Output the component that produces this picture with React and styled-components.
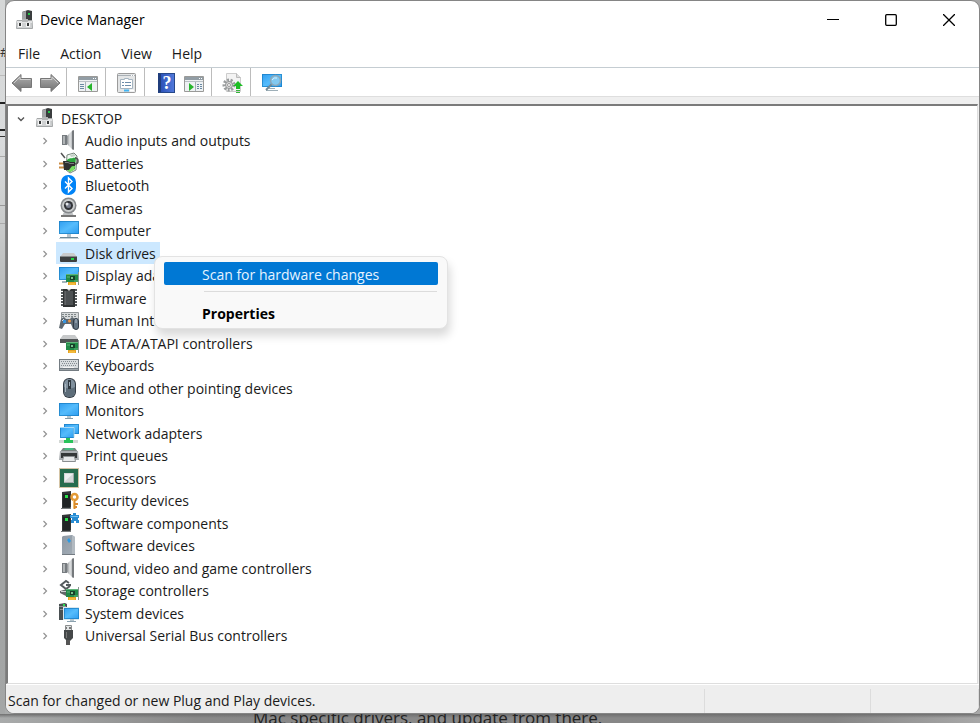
import React from "react";
import styled, { createGlobalStyle, css } from "styled-components";

const GlobalStyle = createGlobalStyle`
  * { box-sizing: border-box; }
  body {
    margin: 0;
    font-family: "Open Sans", "Noto Sans", sans-serif;
    font-size: 14px;
    color: #1a1a1a;
  }
  button {
    font: inherit;
    color: inherit;
    background: none;
    border: 0;
    padding: 0;
  }
  svg { display: block; flex: none; }
`;

/* ---------- desktop and window ---------- */

const Desktop = styled.div`
  min-height: 100vh;
  display: flex;
  flex-direction: column;
  overflow: hidden;
  background: linear-gradient(90deg, #a9abab, #898989 20%, #868686 85%, #a8a8a8);
`;

const Middle = styled.div`
  flex: 1;
  display: flex;
`;

const DocumentEdge = styled.div`
  width: 5px;
  flex: none;
  overflow: hidden;
  display: flex;
  flex-direction: column;
  color: #333;
  font-size: 13px;
  line-height: 18px;
  background: linear-gradient(#d5d7d7, #d9dbdc 20%, #c8caca 32%, #9fa1a1 55%, #a4a6a6);
`;

const EdgeCell = styled.span`
  height: ${(p) => p.$height}px;
  flex: none;
  display: flex;
  align-items: flex-end;
  border-bottom: ${(p) => p.$rule || "0"} solid ${(p) => p.$tone || "transparent"};
`;

const Underlay = styled.p`
  margin: 0;
  height: 9px;
  flex: none;
  overflow: hidden;
  display: flex;
  align-items: flex-end;
  padding-left: 253px;
  font-size: 17px;
  line-height: 10px;
  color: #222;
  background: linear-gradient(#6f6f6f, transparent 4px);
`;

const Window = styled.main`
  flex: 1;
  min-width: 0;
  display: flex;
  flex-direction: column;
  overflow: hidden;
  background: #fff;
  border: 1px solid #858585;
  border-radius: 9px;
`;

const TitleBar = styled.header`
  height: 38px;
  display: flex;
  align-items: center;
  padding-left: 8px;
`;

const Title = styled.h1`
  margin: 0 auto 0 4px;
  padding-bottom: 2px;
  font-size: 14px;
  font-weight: 400;
  color: #000;
`;

const CaptionButton = styled.button`
  width: 58px;
  height: 38px;
  display: grid;
  place-items: center;
`;

const CaptionButtons = styled.div`
  display: flex;
  padding-right: 1px;
`;

const MenuBar = styled.nav`
  height: 28px;
  display: flex;
  align-items: center;
  gap: 20px;
  padding-left: 12px;
`;

const Toolbar = styled.div`
  height: 30px;
  display: flex;
  align-items: center;
  padding-left: 2px;
  border-top: 1px solid #c5cdd2;
  border-bottom: 1px solid #dedede;
`;

const ToolButton = styled.button`
  width: 28px;
  height: 26px;
  padding-top: 2px;
  display: grid;
  place-items: center;
`;

const ToolGroup = styled.div`
  height: 28px;
  display: flex;
  align-items: center;
  padding-right: 2px;
  & + & {
    padding: 0 3px 0 7px;
    border-left: 1px solid #bcbcbc;
  }
`;

const Body = styled.section`
  flex: 1;
  display: flex;
  padding-top: 7px;
  background: #efefef;
`;

const Tree = styled.ul`
  flex: 1;
  margin: 0 1px 0 0;
  padding: 1px 0 0;
  list-style: none;
  background: #fff;
  border-style: solid;
  border-width: 2px 1px 1px 2px;
  border-color: #7b7b7b #dedede #dedede #7b7b7b;
`;

const Row = styled.li`
  height: 22px;
  display: flex;
  align-items: flex-start;
  padding-left: ${(p) => (p.$root ? 6 : 30)}px;
  &:nth-child(even) { height: 23px; }
`;

const Toggle = styled.button`
  width: 14px;
  height: 24px;
  margin-right: 4px;
  display: grid;
  place-items: center;
`;

const Item = styled.button`
  height: 22px;
  display: flex;
  align-items: center;
  gap: 5px;
  padding: 0 4px 0 2px;
  ${(p) => p.$selected && css`background: #cce8ff;`}
`;

const Label = styled.span`
  padding-top: 2px;
  line-height: 20px;
  white-space: nowrap;
`;

const StatusBar = styled.footer`
  height: 29px;
  display: flex;
  padding-top: 4px;
  border-top: 1px solid #fff;
  background: #eee;
`;

const StatusCell = styled.div`
  width: ${(p) => p.$width};
  flex: ${(p) => (p.$width ? "none" : "1")};
  display: flex;
  align-items: center;
  padding-left: 2px;
  border-right: 1px solid #dcdcdc;
  line-height: 24px;
  white-space: nowrap;
`;

const ContextMenu = styled.div`
  position: absolute;
  left: 154px;
  top: 256px;
  width: 294px;
  padding: 5px 9px 4px;
  background: #f9f9f9;
  border: 1px solid #e3e3e3;
  border-radius: 8px;
  box-shadow: 2px 7px 10px rgba(0, 0, 0, 0.15);
`;

const ContextItem = styled.button`
  display: block;
  width: 274px;
  height: 23px;
  padding: 2px 0 0 38px;
  text-align: left;
  line-height: 21px;
  border-radius: 2px;
  ${(p) => p.$active && css`background: #0078d4; color: #e6f3ff;`}
  ${(p) => p.$strong && css`font-weight: 700; color: #000;`}
`;

const Divider = styled.hr`
  margin: 6px 1px 9px 40px;
  border: 0;
  border-top: 1px solid #dcdcdc;
`;

/* ---------- icons ---------- */

const Svg = ({ children, w = 22, h = 22 }) => (
  <svg width={w} height={h} viewBox={`0 0 ${w} ${h}`} fill="none" aria-hidden="true">
    {children}
  </svg>
);

const Gradients = () => (
  <svg width="0" height="0" aria-hidden="true">
    <defs>
      <linearGradient id="screen" x1="0" y1="0" x2="1" y2="1">
        <stop offset="0" stopColor="#2f9df0" />
        <stop offset="0.5" stopColor="#55bcfc" />
        <stop offset="1" stopColor="#2b9bf0" />
      </linearGradient>
      <linearGradient id="steel" x1="0" y1="0" x2="1" y2="0">
        <stop offset="0" stopColor="#8b8f92" />
        <stop offset="0.5" stopColor="#e2e4e5" />
        <stop offset="1" stopColor="#a5a9ac" />
      </linearGradient>
      <linearGradient id="arrow" x1="0" y1="0" x2="0" y2="1">
        <stop offset="0" stopColor="#b0b0b0" />
        <stop offset="1" stopColor="#717171" />
      </linearGradient>
      <linearGradient id="tower" x1="0" y1="0" x2="1" y2="1">
        <stop offset="0" stopColor="#8d98a3" />
        <stop offset="1" stopColor="#a3adb6" />
      </linearGradient>
    </defs>
  </svg>
);

const Card = () => (
  <g>
    <path d="M8 10h12v8H8z" fill="#218a48" />
    <path d="M20.500 8v13" stroke="#8a9791" />
    <path d="M8 10.500h12M9 13h3M16 17h4" stroke="#62b47b" />
    <path d="M12 12h5v4h-5z" fill="#183f2a" />
    <path d="M13 13h2v2h-2z" fill="#78c38c" />
    <path d="M10 18h8v3h-8z" fill="#e5a321" />
    <path d="M12 19v2M14 19v2M16 19v2" stroke="#ffd158" />
  </g>
);

const ManagerIcon = () => (
  <Svg>
    <path d="M8 3l6-2 4 1v10H8z" fill="#3a3d3e" />
    <path d="M8 3l4-1v9H8z" fill="#a2a5a6" />
    <path d="M14 4h2v2h-2z" fill="#25c84b" />
    <path d="M3 11.500h15l.5 8h-16z" fill="#d0d2d3" stroke="#a4a7a8" />
    <path d="M3 12h15v2H3z" fill="#e2e3e4" />
    <path d="M4 14h4v4H4zM12 14h4v4h-4z" fill="#f5f5f5" />
    <path d="M5 14h2v3H5zM13 14h2v3h-2z" fill="#343738" />
    <path d="M8 10h6v3H8z" fill="#b4b6b7" />
  </Svg>
);

const Speaker = () => (
  <Svg>
    <path d="M4 6h5v10H4z" fill="#777c80" />
    <path d="M5 7h2v8H5z" fill="#b0b4b6" />
    <path d="M9 7l6-6v20l-6-6z" fill="url(#steel)" />
    <path d="M14 2l2-1v20l-2-1z" fill="#75797c" />
  </Svg>
);

const Battery = () => (
  <Svg>
    <path d="M9 3l7-2 3 3-1 14-6 3-4-3z" fill="#f2f8f2" stroke="#77857b" />
    <path d="M9 8c3-3 7-1 9-3l-1 12-5 3-3-2z" fill="#2aa53c" />
    <path d="M9 15l8-1-1 4-4 2-3-2z" fill="#7ade62" />
    <path d="M12 3l4-1 2 2-5 1z" fill="#c3cfc6" />
    <path d="M3 1l4 5M17 6c4 0 4 6 0 6" stroke="#555" strokeWidth="1.500" />
    <path d="M1 11.500h6M1 15.500h6" stroke="#c98a42" strokeWidth="2" />
    <path d="M5 9h5l2 1h5v4h-3l-3 4H6z" fill="#2d2f30" />
    <path d="M7 10.500h3l2 1h4" stroke="#7b7e80" />
  </Svg>
);

const Bluetooth = () => (
  <Svg>
    <rect x="3" y="1" width="15" height="20" rx="7" fill="#0083f7" />
    <path d="M7 7.500l7 7-3.500 3.500V4L14 7.500l-7 7" stroke="#fff" strokeWidth="1.400" />
  </Svg>
);

const Camera = () => (
  <Svg>
    <path d="M6 15h8l2 4H4z" fill="#bfc2c4" />
    <path d="M3 19h15" stroke="#777" strokeWidth="2" />
    <circle cx="10.500" cy="8.500" r="8" fill="#85888b" />
    <circle cx="10.500" cy="8.500" r="6.500" fill="#c9cccd" />
    <circle cx="10.500" cy="8.500" r="4.500" fill="#303236" />
    <circle cx="10.500" cy="8.500" r="2.500" fill="#7b8190" />
    <circle cx="9" cy="7" r="1.500" fill="#e4e6e9" />
  </Svg>
);

const Screen = ({ x = 1, y = 2, w = 19, h = 13 }) => (
  <g>
    <rect x={x} y={y} width={w} height={h} fill="url(#screen)" />
    <rect x={x + 0.5} y={y + 0.5} width={w - 1} height={h - 1} stroke="#1679bd" strokeOpacity="0.65" />
  </g>
);

const Computer = () => (
  <Svg>
    <Screen x={1} y={2} w={20} h={13} />
    <path d="M9 15h4v3H9z" fill="#b6c4cc" />
    <path d="M2 18.500h18" stroke="#6d8998" />
    <path d="M1 19.500h20" stroke="#c6d2d8" />
  </Svg>
);

const Disk = () => (
  <Svg>
    <path d="M5 11h11l3 4H2z" fill="#c9cbcc" />
    <rect x="2" y="14" width="17" height="6" rx="1" fill="#3d4041" />
    <path d="M2 14.500h17" stroke="#868a8b" />
    <path d="M13 16h3v2h-3z" fill="#22d845" />
  </Svg>
);

const Display = () => (
  <Svg>
    <Screen x={1} y={3} w={20} h={13} />
    <path d="M4 18h5" stroke="#a6b5bd" strokeWidth="2" />
    <Card />
  </Svg>
);

const Firmware = () => (
  <Svg>
    <path d="M3 3h3M3 6h3M3 9h3M3 12h3M3 15h3M3 18h3M16 3h3M16 6h3M16 9h3M16 12h3M16 15h3M16 18h3" stroke="#55595b" strokeWidth="2" />
    <path d="M5 2h12v18H5z" fill="#303334" />
    <path d="M7 4h8v14H7z" fill="#4c5052" />
    <path d="M9 2h4l-2 2z" fill="#d5d6d6" />
    <path d="M7 4v14" stroke="#77797a" />
  </Svg>
);

const Human = () => (
  <Svg>
    <path d="M3.500 3.500h17v7h-17z" fill="#d7dadb" stroke="#929799" />
    <path d="M4 5.500h15M4 7.500h15" stroke="#7e8587" strokeDasharray="2 1" />
    <path d="M3 10l3-2 2 2h4l2-2 3 2 1 9-3 1-2-5H7l-3 5-3-1z" fill="#5e6870" />
    <path d="M4 11.500h3M5.500 10v3" stroke="#ddd" />
    <path d="M5 11h3v3H5z" fill="#3a94dc" />
    <circle cx="11.500" cy="12" r="1.500" fill="#ec9545" />
    <rect x="15.500" y="9.500" width="5" height="11" rx="2.500" fill="#657583" stroke="#303b45" />
    <path d="M18 10v4" stroke="#b2bfca" />
  </Svg>
);

const Ide = () => (
  <Svg>
    <path d="M5 3h12l3 4H2z" fill="#c7c9ca" />
    <path d="M2 7h18v4H2z" fill="#515556" />
    <Card />
  </Svg>
);

const Keyboard = () => (
  <Svg>
    <path d="M1 5h20v12H1z" fill="#747c82" />
    <path d="M2 6h18v8H2z" fill="#d9dddf" />
    <path d="M3 7.500h16M4 9.500h15M3 11.500h16" stroke="#858d92" strokeDasharray="1 1" />
    <path d="M5 13.500h11" stroke="#f4f4f4" />
    <path d="M2 15.500h18" stroke="#9da5a9" />
  </Svg>
);

const Mouse = () => (
  <Svg>
    <rect x="5" y="1" width="13" height="20" rx="6" fill="#333c45" />
    <rect x="6" y="2" width="11" height="18" rx="5" fill="#80909d" />
    <path d="M6 10q5.500 3 11 0v5q-1 5-5.500 5T6 15z" fill="#5d6d79" />
    <path d="M10 3h3v9h-3z" fill="#303940" />
    <path d="M11.500 5v4" stroke="#9faeba" />
    <path d="M7.500 7v8" stroke="#aab6bf" />
  </Svg>
);

const Monitor = () => (
  <Svg>
    <Screen x={1} y={4} w={20} h={13} />
    <path d="M9 17h4v2H9z" fill="#b8c6cd" />
    <path d="M7 19.500h8" stroke="#849ba7" />
  </Svg>
);

const Network = () => (
  <Svg>
    <Screen x={6} y={2} w={15} h={10} />
    <Screen x={2} y={5} w={14} h={11} />
    <path d="M2 5.500h14v10" stroke="#a9daf8" />
    <path d="M1 18h19v3H1z" fill="#d3d8d5" />
    <path d="M8 16h4v2h3v3H6v-3h2z" fill="#28c35a" />
  </Svg>
);

const Printer = () => (
  <Svg>
    <path d="M5 4h12l3 4H2z" fill="#77837f" />
    <path d="M7 4h8l1 2H6z" fill="#48b980" />
    <path d="M2 7h18l1 9H1z" fill="#a9adb0" />
    <path d="M3 9h16v5H3z" fill="#343738" />
    <path d="M5.500 12.500h11l1 5h-13z" fill="#e6e8e9" stroke="#8a8e90" />
  </Svg>
);

const Processor = () => (
  <Svg>
    <rect x="1.500" y="1.500" width="19" height="19" stroke="#a8894a" strokeDasharray="1 1" />
    <path d="M2 2h18v18H2z" fill="#276c4e" />
    <path d="M6 6h10v10H6z" fill="#d4d8d8" />
    <path d="M7 7h8l-8 7z" fill="#eef0f0" />
    <path d="M6 15.500h9.500V6" stroke="#a3aaaa" />
  </Svg>
);

const DarkTower = () => (
  <g>
    <path d="M4 3l9-1v16l-1 2H4z" fill="#313536" />
    <path d="M5 5h7v13H5z" fill="#202425" />
    <path d="M7 6h3v3H7z" fill="#2bdf4b" />
    <path d="M3 19h10v1H3z" fill="#777b7c" />
  </g>
);

const Security = () => (
  <Svg>
    <DarkTower />
    <circle cx="16.500" cy="8" r="3" stroke="#e39a36" strokeWidth="2.500" />
    <path d="M16.500 11v9M17 15h3M17 18h2" stroke="#d98b2d" strokeWidth="2" />
    <path d="M15.500 11v8" stroke="#f4bf6a" />
  </Svg>
);

const Components = () => (
  <Svg>
    <DarkTower />
    <path d="M12 3h3V1h3v2h3v3h-1v2h1v3h-3V9h-2v2h-3V8h1V6h-2z" fill="#288cd3" />
    <path d="M13 4.500h7" stroke="#6fbbed" />
  </Svg>
);

const SoftDevice = () => (
  <Svg>
    <path d="M5 2l9-1 3 2v17H4V3z" fill="url(#tower)" />
    <path d="M14 1l3 2v17h-3z" fill="#b2bac1" />
    <path d="M9 6l2-2 2 3-2 2z" fill="#2b9be5" />
    <path d="M4 20.500h13" stroke="#737b82" />
  </Svg>
);

const Storage = () => (
  <Svg>
    <path d="M11 4L8 2 3 6l5 4 4-3" stroke="#555b5d" strokeWidth="2" />
    <path d="M8 6h5" stroke="#555b5d" strokeWidth="2" />
    <path d="M2 12l7-2 2 4v4l-3-1-6-3z" fill="#626869" />
    <path d="M3 12.500h5" stroke="#d1d5d5" />
    <Card />
  </Svg>
);

const SystemIcon = () => (
  <Svg>
    <path d="M1 2l6-1 2 1v16H1z" fill="#4a5052" />
    <path d="M1 4.500h7M2 7.500h4" stroke="#8e9698" />
    <path d="M5 2h2v2H5z" fill="#2cd951" />
    <path d="M5 5h16v13H5z" fill="#d8e7ef" />
    <Screen x={6} y={6} w={15} h={11} />
    <path d="M9 19.500h9" stroke="#8ba2af" />
    <path d="M12 17h4v2h-4z" fill="#b7c6ce" />
  </Svg>
);

const Usb = () => (
  <Svg>
    <path d="M7.500 1.500h6v6h-6z" fill="#e2e4e4" stroke="#8b8e8f" />
    <path d="M8 3h1v2H8zM11 3h2v2h-2z" fill="#777" />
    <path d="M6 6h9v8l-3 3H9l-3-3z" fill="#454849" />
    <path d="M8.500 8v6" stroke="#777" />
    <path d="M8 16h4v5H8z" fill="#555" />
  </Svg>
);

const Back = () => (
  <Svg>
    <path d="M1 11l9-8.500v4h10.500v9H10v4z" fill="url(#arrow)" stroke="#777" />
    <path d="M3 11l6-6v2.500h10.500" stroke="#cdcdcd" />
  </Svg>
);

const Forward = () => (
  <Svg>
    <path d="M21 11l-9-8.500v4H1.500v9H12v4z" fill="url(#arrow)" stroke="#777" />
    <path d="M19 11l-6-6v2.500H2.500" stroke="#cdcdcd" />
  </Svg>
);

const Pane = ({ flip }) => (
  <Svg>
    <path d="M1.500 4.500h19v15h-19z" fill="#eef1f3" stroke="#9a9a98" />
    <path d="M2 5h18v3H2z" fill="#929da5" />
    <path d="M16 6.500h1M18 6.500h1" stroke="#fff" />
    <path d="M2 9.500h18" stroke="#b9c0c5" />
    {flip ? (
      <g>
        <path d="M6 11v8l5-4z" fill="#27b52d" />
        <path d="M12.500 10v9" stroke="#a7b0b8" />
        <path d="M14 12.500h2M14 14.500h2M14 16.500h2M17 12.500h2M17 14.500h2M17 16.500h2" stroke="#6989a3" />
      </g>
    ) : (
      <g>
        <path d="M15 11v8l-5-4z" fill="#27b52d" />
        <path d="M8.500 10v9" stroke="#a7b0b8" />
        <path d="M3 12.500h4M3 14.500h4M3 16.500h4" stroke="#6989a3" />
      </g>
    )}
  </Svg>
);

const Properties = () => (
  <Svg>
    <rect x="1.500" y="1.500" width="18" height="19" rx="1" fill="#e3e5e6" stroke="#9b9b9b" />
    <path d="M2 3.500h17" stroke="#a9b0b6" />
    <path d="M15 3.500h1M17 3.500h1" stroke="#fff" />
    <path d="M4.500 7.500h4v-1h4v1h4v9h-12z" fill="#fff" stroke="#a5b4c0" />
    <path d="M6 10.500h2M9 10.500h6M6 13.500h2M9 13.500h6" stroke="#6d8dab" />
    <path d="M8 18.500h5" stroke="#42b5f3" strokeWidth="2" />
    <path d="M14 18.500h4" stroke="#fff" strokeWidth="2" />
  </Svg>
);

const HelpGlyph = styled.span`
  width: 17px;
  height: 20px;
  display: grid;
  place-items: center;
  border: 1px solid #274889;
  border-left: 3px solid #203d7c;
  background: linear-gradient(90deg, #2d53b9, #5078da);
  color: #fff;
  font: 700 18px/18px "Liberation Serif", serif;
`;

const Update = () => (
  <Svg>
    <path d="M4.500 1.500h10l4 4v14h-14z" fill="#f3f3f3" stroke="#ccc" />
    <path d="M14.500 1.500v4h4" fill="#ddd" stroke="#bbb" />
    <circle cx="7" cy="13" r="5" stroke="#9a9d9e" strokeWidth="3" strokeDasharray="2 1.500" />
    <circle cx="7" cy="13" r="3.500" fill="#ddd" stroke="#8e9192" />
    <circle cx="7" cy="13" r="1.500" fill="#fff" stroke="#999" />
    <path d="M16 9l5 5h-3v3h-4v-3h-3z" fill="#1dbd25" />
    <path d="M14 18.500h4M14 20.500h4" stroke="#38b63c" />
  </Svg>
);

const Scan = () => (
  <Svg>
    <Screen x={1} y={2} w={20} h={13} />
    <path d="M5 18.500h12M8 16.500h6" stroke="#9eafb8" />
    <path d="M11 12l-6 6" stroke="#718895" strokeWidth="2" />
    <circle cx="14.500" cy="8.500" r="5" fill="#82c9f1" stroke="#8ba7b8" strokeWidth="1.500" />
    <path d="M11 8q2-3 5-2" stroke="#d8f1ff" />
  </Svg>
);

const Chevron = ({ open }) => (
  <Svg w={8} h={8}>
    {open ? (
      <path d="M1 2.500l3 3 3-3" stroke="#555" strokeWidth="1.400" />
    ) : (
      <path d="M2.500 1l3 3-3 3" stroke="#929292" strokeWidth="1.200" />
    )}
  </Svg>
);

/* ---------- content ---------- */

const devices = [
  ["Audio inputs and outputs", Speaker],
  ["Batteries", Battery],
  ["Bluetooth", Bluetooth],
  ["Cameras", Camera],
  ["Computer", Computer],
  ["Disk drives", Disk],
  ["Display adapters", Display],
  ["Firmware", Firmware],
  ["Human Interface Devices", Human],
  ["IDE ATA/ATAPI controllers", Ide],
  ["Keyboards", Keyboard],
  ["Mice and other pointing devices", Mouse],
  ["Monitors", Monitor],
  ["Network adapters", Network],
  ["Print queues", Printer],
  ["Processors", Processor],
  ["Security devices", Security],
  ["Software components", Components],
  ["Software devices", SoftDevice],
  ["Sound, video and game controllers", Speaker],
  ["Storage controllers", Storage],
  ["System devices", SystemIcon],
  ["Universal Serial Bus controllers", Usb],
];

const tools = [
  [["Back", <Back />], ["Forward", <Forward />]],
  [["Show or hide console tree", <Pane />]],
  [["Properties", <Properties />]],
  [["Help", <HelpGlyph>?</HelpGlyph>], ["Show or hide action pane", <Pane flip />]],
  [["Update device driver", <Update />]],
  [["Scan for hardware changes", <Scan />]],
];

function TreeRow({ label, icon: Icon, root, selected }) {
  return (
    <Row $root={root}>
      <Toggle aria-label={`${root ? "Collapse" : "Expand"} ${label}`}>
        <Chevron open={root} />
      </Toggle>
      <Item $selected={selected}>
        <Icon />
        <Label>{label}</Label>
      </Item>
    </Row>
  );
}

export default function App() {
  return (
    <Desktop>
      <GlobalStyle />
      <Middle>
        <DocumentEdge aria-hidden="true">
          <EdgeCell $height={61}>#</EdgeCell>
          <EdgeCell $height={15} $rule="1px" $tone="#bbb" />
          <EdgeCell $height={28} $rule="2px" $tone="#222" />
          <EdgeCell $height={27} $rule="2px" $tone="#222" />
          <EdgeCell $height={6} $rule="1px" $tone="#333" />
          <EdgeCell $height={20} $rule="1px" $tone="#aaa" />
          <EdgeCell $height={49} $rule="1px" $tone="#999" />
          <EdgeCell $height={18} $rule="1px" $tone="#aaa" />
        </DocumentEdge>
        <Window>
          <TitleBar>
            <ManagerIcon />
            <Title>Device Manager</Title>
            <CaptionButtons>
              <CaptionButton aria-label="Minimize">
                <Svg w={12} h={12}><path d="M0 5.500h12" stroke="#000" /></Svg>
              </CaptionButton>
              <CaptionButton aria-label="Maximize">
                <Svg w={12} h={12}><rect x="0.700" y="0.700" width="10.600" height="10.600" rx="1" stroke="#000" strokeWidth="1.300" /></Svg>
              </CaptionButton>
              <CaptionButton aria-label="Close">
                <Svg w={12} h={12}><path d="M0 0l12 12M12 0L0 12" stroke="#000" strokeWidth="1.300" /></Svg>
              </CaptionButton>
            </CaptionButtons>
          </TitleBar>
          <MenuBar>
            {["File", "Action", "View", "Help"].map((m) => <button key={m}>{m}</button>)}
          </MenuBar>
          <Toolbar>
            {tools.map((group, i) => (
              <ToolGroup key={i}>
                {group.map(([name, icon]) => (
                  <ToolButton key={name} aria-label={name}>{icon}</ToolButton>
                ))}
              </ToolGroup>
            ))}
          </Toolbar>
          <Body>
            <Tree>
              <TreeRow label="DESKTOP" icon={ManagerIcon} root />
              {devices.map(([label, icon]) => (
                <TreeRow key={label} label={label} icon={icon} selected={label === "Disk drives"} />
              ))}
            </Tree>
          </Body>
          <StatusBar>
            <StatusCell>Scan for changed or new Plug and Play devices.</StatusCell>
            <StatusCell $width="166px" />
            <StatusCell $width="108px" />
          </StatusBar>
        </Window>
      </Middle>
      <Underlay>Mac specific drivers, and update from there.</Underlay>
      <ContextMenu>
        <ContextItem $active>Scan for hardware changes</ContextItem>
        <Divider />
        <ContextItem $strong>Properties</ContextItem>
      </ContextMenu>
      <Gradients />
    </Desktop>
  );
}
